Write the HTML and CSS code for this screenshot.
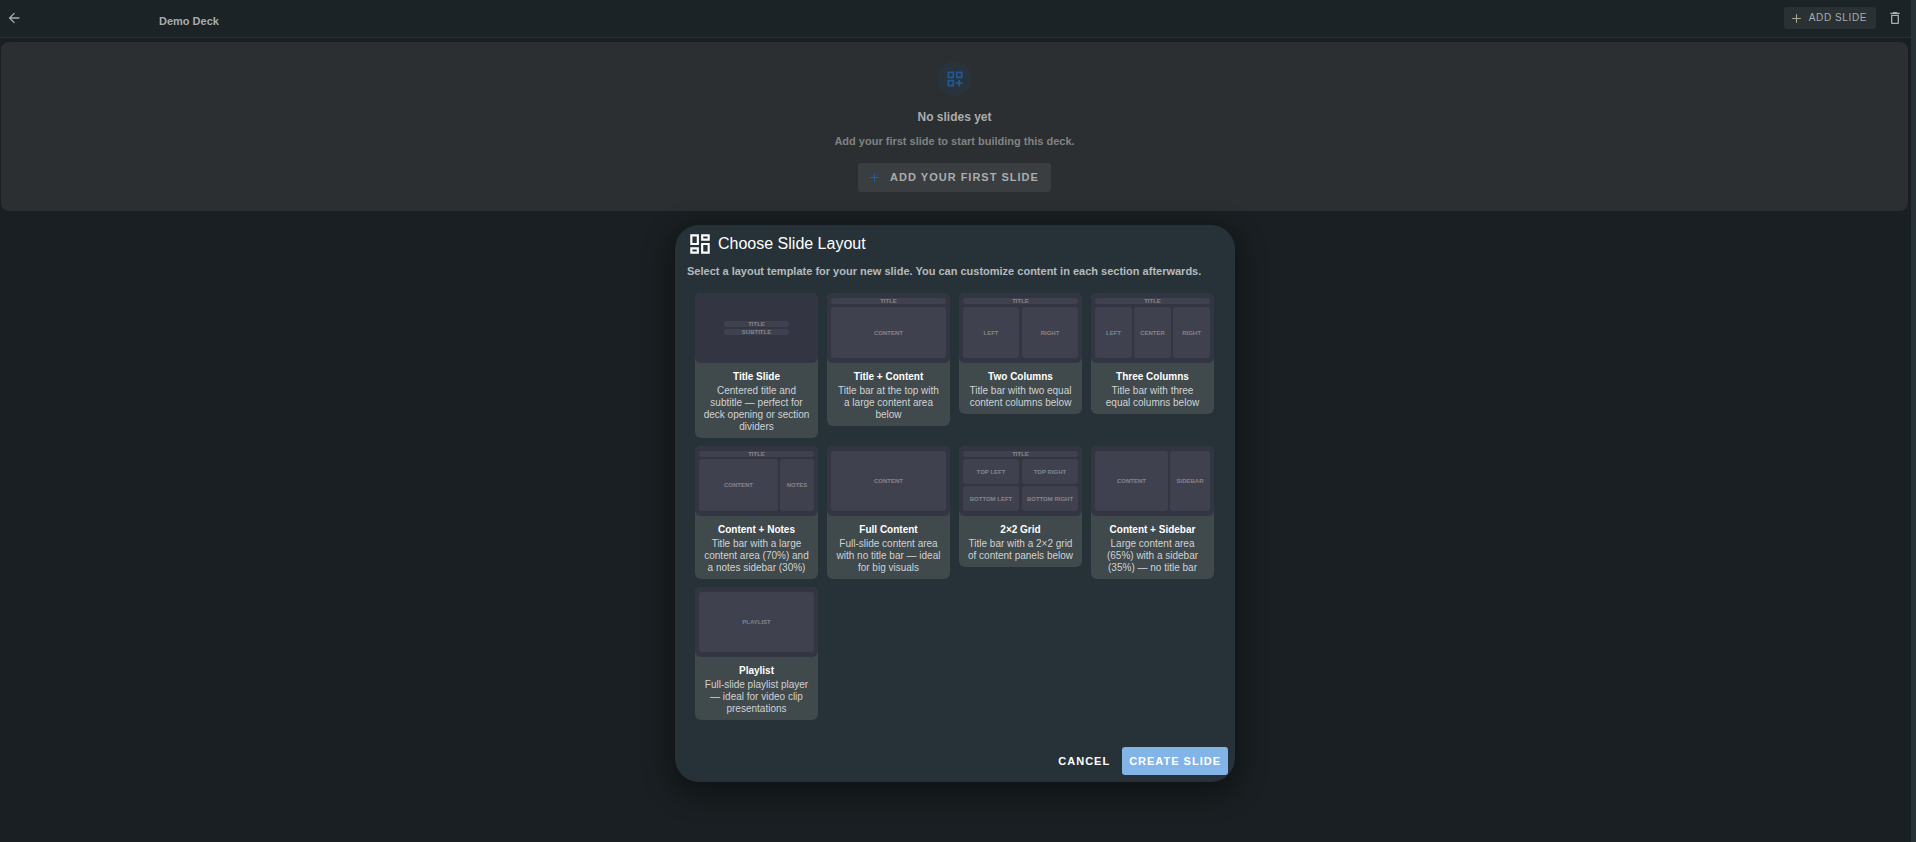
FILE: index.html
```html
<!DOCTYPE html>
<html lang="en">
<head>
<meta charset="utf-8">
<title>Demo Deck</title>
<link rel="stylesheet" href="styles.css">
</head>
<body>
<div class="page">
  <header class="topbar">
    <button class="icon-btn" type="button" aria-label="Back">
      <svg class="icon-back" viewBox="0 0 24 24"><path d="M20 11H7.830l5.590-5.590L12 4l-8 8 8 8 1.410-1.410L7.830 13H20v-2z"/></svg>
    </button>
    <h1 class="deck-title">Demo Deck</h1>
    <button class="btn btn-add" type="button">
      <svg class="icon-plus" viewBox="0 0 24 24"><path d="M20 13h-7v7h-2v-7H4v-2h7V4h2v7h7z"/></svg>
      Add slide
    </button>
    <button class="icon-btn" type="button" aria-label="Delete deck">
      <svg class="icon-trash" viewBox="0 0 24 24"><path d="M6 19c0 1.100.9 2 2 2h8c1.100 0 2-.9 2-2V7H6v12zM8 9h8v10H8V9zm7.500-5-1-1h-5l-1 1H5v2h14V4h-3.500z"/></svg>
    </button>
  </header>
  <main class="empty">
    <span class="empty-badge">
      <svg class="icon-widgets" viewBox="0 0 24 24"><path d="M3 3v8h8V3H3zm6 6H5V5h4v4zm-6 4v8h8v-8H3zm6 6H5v-4h4v4zm4-16v8h8V3h-8zm6 6h-4V5h4v4zm-3 4v3h-3v2h3v3h2v-3h3v-2h-3v-3h-2z"/></svg>
    </span>
    <h2 class="empty-title">No slides yet</h2>
    <p class="empty-text">Add your first slide to start building this deck.</p>
    <button class="btn btn-first" type="button">
      <svg class="icon-plus" viewBox="0 0 24 24"><path d="M20 13h-7v7h-2v-7H4v-2h7V4h2v7h7z"/></svg>
      Add your first slide
    </button>
  </main>
</div>

<div class="overlay">
  <section class="dialog" role="dialog" aria-labelledby="dialog-title">
    <header class="dialog-head">
      <svg class="icon-layout" viewBox="0 0 24 24"><path d="M19 5v2h-4V5h4M9 5v6H5V5h4m10 8v6h-4v-6h4M9 17v2H5v-2h4M21 3h-8v6h8V3zM11 3H3v10h8V3zm10 8h-8v10h8V11zm-10 4H3v6h8v-6z"/></svg>
      <h2 class="dialog-title" id="dialog-title">Choose Slide Layout</h2>
    </header>
    <p class="dialog-text">Select a layout template for your new slide. You can customize content in each section afterwards.</p>
    <div class="layouts">
      <button class="card" type="button">
        <span class="thumb thumb-cover"><span class="zone">Title</span><span class="zone">Subtitle</span></span>
        <span class="card-title">Title Slide</span>
        <span class="card-text">Centered title and subtitle — perfect for deck opening or section dividers</span>
      </button>
      <button class="card" type="button">
        <span class="thumb thumb-loose"><span class="zone zone-bar">Title</span><span class="zone">Content</span></span>
        <span class="card-title">Title + Content</span>
        <span class="card-text">Title bar at the top with a large content area below</span>
      </button>
      <button class="card" type="button">
        <span class="thumb thumb-loose thumb-two"><span class="zone zone-bar">Title</span><span class="zone">Left</span><span class="zone">Right</span></span>
        <span class="card-title">Two Columns</span>
        <span class="card-text">Title bar with two equal content columns below</span>
      </button>
      <button class="card" type="button">
        <span class="thumb thumb-loose thumb-three"><span class="zone zone-bar">Title</span><span class="zone">Left</span><span class="zone">Center</span><span class="zone">Right</span></span>
        <span class="card-title">Three Columns</span>
        <span class="card-text">Title bar with three equal columns below</span>
      </button>
      <button class="card" type="button">
        <span class="thumb thumb-notes"><span class="zone zone-bar">Title</span><span class="zone">Content</span><span class="zone">Notes</span></span>
        <span class="card-title">Content + Notes</span>
        <span class="card-text">Title bar with a large content area (70%) and a notes sidebar (30%)</span>
      </button>
      <button class="card" type="button">
        <span class="thumb thumb-full"><span class="zone">Content</span></span>
        <span class="card-title">Full Content</span>
        <span class="card-text">Full-slide content area with no title bar — ideal for big visuals</span>
      </button>
      <button class="card" type="button">
        <span class="thumb thumb-quad"><span class="zone zone-bar">Title</span><span class="zone">Top left</span><span class="zone">Top right</span><span class="zone">Bottom left</span><span class="zone">Bottom right</span></span>
        <span class="card-title">2×2 Grid</span>
        <span class="card-text">Title bar with a 2×2 grid of content panels below</span>
      </button>
      <button class="card" type="button">
        <span class="thumb thumb-sidebar"><span class="zone">Content</span><span class="zone">Sidebar</span></span>
        <span class="card-title">Content + Sidebar</span>
        <span class="card-text">Large content area (65%) with a sidebar (35%) — no title bar</span>
      </button>
      <button class="card" type="button">
        <span class="thumb thumb-full"><span class="zone">Playlist</span></span>
        <span class="card-title">Playlist</span>
        <span class="card-text">Full-slide playlist player — ideal for video clip presentations</span>
      </button>
    </div>
    <footer class="dialog-actions">
      <button class="btn btn-cancel" type="button">Cancel</button>
      <button class="btn btn-create" type="button">Create slide</button>
    </footer>
  </section>
</div>
</body>
</html>
```
FILE: styles.css
```css
* { box-sizing: border-box; }

body {
  margin: 0;
  min-height: 100vh;
  background: #191f22;
  border-right: 5px solid #263238;
  font-family: "Liberation Sans", Arial, sans-serif;
  color: #fff;
}

h1, h2, p { margin: 0; }
svg { display: block; fill: currentColor; flex: none; }
button { border: 0; margin: 0; font-family: inherit; color: inherit; cursor: pointer; }

.topbar {
  display: flex;
  align-items: center;
  height: 38px;
  padding: 0 2px 2px 0;
  background: #1c2326;
  border-bottom: 1px solid #2a3032;
  color: #a9abac;
}

.icon-btn {
  display: flex;
  align-items: center;
  justify-content: center;
  width: 28px;
  height: 28px;
  padding: 0;
  background: none;
}

.icon-back { width: 16px; height: 16px; }
.icon-trash { width: 16px; height: 16px; }
.icon-plus { width: 13px; height: 13px; }

.deck-title {
  flex: 1;
  padding: 6px 0 0 131px;
  font-size: 11px;
  line-height: 14px;
}

.btn {
  display: flex;
  align-items: center;
  justify-content: center;
  border-radius: 3px;
  font-size: 11px;
  font-weight: 700;
  line-height: 14px;
  letter-spacing: 1px;
  text-transform: uppercase;
}

.btn-add {
  gap: 6px;
  height: 22px;
  margin-right: 5px;
  padding: 1px 9px 0 6px;
  background: #2a3134;
  font-size: 10px;
  font-weight: 400;
  letter-spacing: .06em;
}

.btn-add .icon-plus { color: #a9a98c; }

.empty {
  display: flex;
  flex-direction: column;
  align-items: center;
  margin: 4px 3px 0 1px;
  padding: 19px 0;
  border-radius: 8px;
  background: #2b2f31;
}

.empty-badge {
  display: flex;
  align-items: center;
  justify-content: center;
  width: 35px;
  height: 35px;
  border-radius: 50%;
  background: #28333c;
  color: #20599a;
}

.icon-widgets { width: 20px; height: 20px; }

.empty-title {
  margin-top: 13px;
  font-size: 12px;
  line-height: 16px;
  color: #aaacad;
}

.empty-text {
  margin-top: 9px;
  font-size: 11px;
  font-weight: 700;
  line-height: 14px;
  color: #808384;
}

.btn-first {
  gap: 9px;
  height: 29px;
  margin-top: 15px;
  padding: 0 12px 1px 10px;
  background: #3a3e40;
  color: #aaacad;
}

.btn-first .icon-plus { color: #2060a6; }

.overlay {
  position: absolute;
  inset: 0;
  display: flex;
  justify-content: center;
  align-items: flex-start;
  padding: 225px 6px 0 0;
}

.dialog {
  width: 560px;
  padding: 7px;
  border-radius: 24px;
  background: #263238;
  box-shadow: 0 8px 28px 4px rgba(0, 0, 0, .4);
}

.dialog-head {
  display: flex;
  align-items: center;
  gap: 5px;
  height: 24px;
  padding-left: 5px;
}

.icon-layout { width: 26px; height: 26px; }

.dialog-title {
  font-size: 16px;
  font-weight: 400;
  line-height: 24px;
}

.dialog-text {
  padding: 8px 5px 0;
  font-size: 11px;
  font-weight: 700;
  line-height: 14px;
  color: #b6babc;
}

.layouts {
  display: grid;
  grid-template-columns: repeat(4, 1fr);
  align-items: start;
  gap: 8px 9px;
  padding: 15px 14px 27px 13px;
}

.card {
  display: flex;
  flex-direction: column;
  align-items: stretch;
  padding: 0 0 5px;
  border-radius: 6px;
  background: #40494c;
  text-align: center;
}

.card-title {
  padding: 7px 0 1px;
  font-size: 10px;
  font-weight: 700;
  line-height: 14px;
}

.card-text {
  padding: 0 7px;
  font-size: 10px;
  font-weight: 400;
  line-height: 12px;
  color: #d0d3d4;
}

.thumb {
  display: grid;
  grid-template-rows: 6px 1fr;
  gap: 2px;
  height: 70px;
  padding: 5px 4px;
  border-radius: 6px;
  background: #343543;
}

.thumb-loose { row-gap: 3px; }
.thumb-two { grid-template-columns: 1fr 1fr; column-gap: 3px; }
.thumb-three { grid-template-columns: 1fr 1fr 1fr; }
.thumb-notes { grid-template-columns: 79px 1fr; }
.thumb-full { grid-template-rows: 1fr; }
.thumb-quad { grid-template: 6px 1fr 1fr / 1fr 1fr; column-gap: 3px; }
.thumb-sidebar { grid-template: 1fr / 73px 1fr; }
.thumb-cover { grid-template: 6px 6px / 65px; place-content: center; }

.zone {
  display: flex;
  align-items: center;
  justify-content: center;
  min-width: 0;
  border-radius: 3px;
  background: #40414e;
  color: #85858d;
  font-size: 6px;
  font-weight: 700;
  line-height: 6px;
  text-transform: uppercase;
  white-space: nowrap;
}

.zone-bar { grid-column: 1 / -1; }

.dialog-actions {
  display: flex;
  justify-content: flex-end;
  gap: 5px;
}

.btn-cancel, .btn-create { height: 28px; padding: 0 7px; background: none; }
.btn-create { background: #82b4e8; }
```
